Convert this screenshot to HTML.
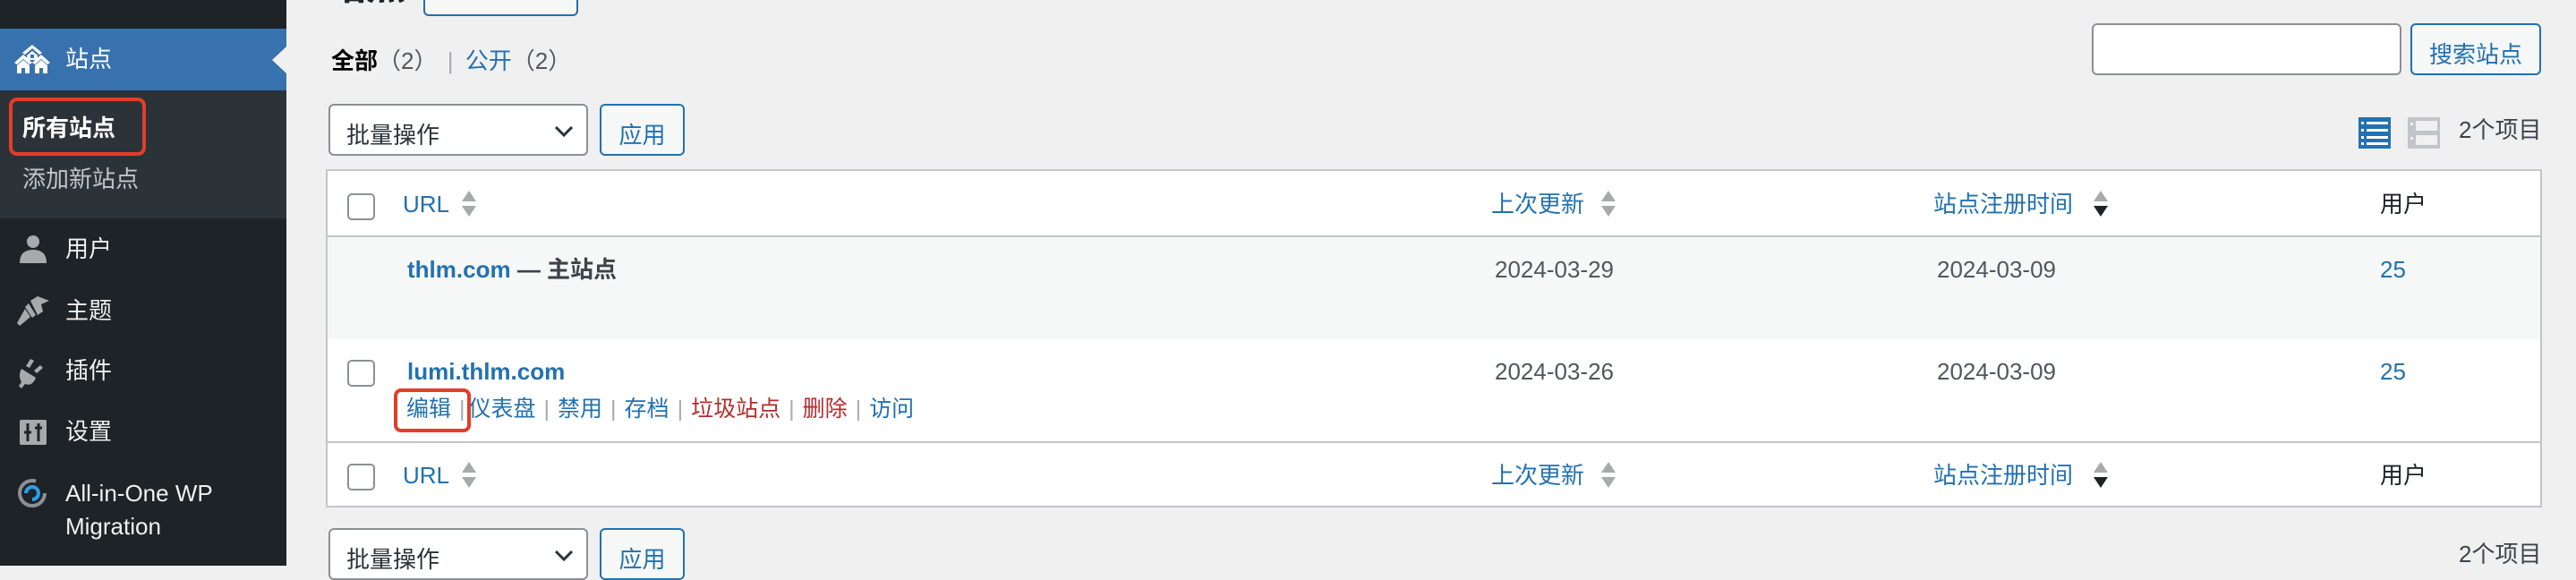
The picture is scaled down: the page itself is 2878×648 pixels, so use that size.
<!DOCTYPE html>
<html><head><meta charset="utf-8">
<style>
*{margin:0;padding:0;box-sizing:border-box}
body{width:2878px;height:632px;overflow:hidden;background:#f0f0f1;font-family:"Liberation Sans","Noto Sans CJK SC",sans-serif;position:relative;color:#3c434a}
.a{position:absolute;white-space:nowrap}
.sb{position:absolute;left:0;top:0;width:320px;height:632px;background:#1d2327}
.mi{position:absolute;left:73px;font-size:26px;color:#f0f0f1;line-height:1}
.ic{position:absolute;left:18px}
.blue{color:#2271b1}
.red{color:#b32d2e}
.cb{position:absolute;width:31px;height:30px;border:2px solid #8c8f94;border-radius:5px;background:#fff;left:388px}
.th{font-size:26px;color:#2271b1;line-height:1}
.td{font-size:26px;color:#50575e;line-height:1}
.sel{position:absolute;left:367px;width:290px;height:58px;border:2px solid #8c8f94;border-radius:6px;background:#fff;font-size:26px;color:#2c3338;padding:13px 0 0 18px}
.btn{position:absolute;left:670px;width:95px;height:58px;border:2px solid #2271b1;border-radius:6px;background:#f6f7f7;font-size:26px;color:#2271b1;text-align:center;padding-top:13px}
.sep{color:#a7aaad}
.act .sep{margin:0 9px 0 9px}
</style></head><body>
<div class="sb"></div>
<div class="a" style="left:0;top:32px;width:320px;height:69px;background:#3872ae"></div>
<div class="a" style="left:304px;top:52px;width:0;height:0;border-top:15px solid transparent;border-bottom:15px solid transparent;border-right:16px solid #f0f0f1"></div>
<svg class="ic" style="top:50px;left:16px" width="40" height="32" viewBox="0 0 40 32" fill="#fff">
<path d="M20 0 L31 9 L28 11 L20 4 L12 11 L9 9Z"/><path d="M14 12 L20 7 L26 12 L26 17 L14 17Z"/>
<path d="M10 11 L20 20 L17 22 L10 16 L3 22 L0 20Z"/><path d="M3 23 L10 17 L17 23 L17 32 L3 32Z"/>
<path d="M30 11 L40 20 L37 22 L30 16 L23 22 L20 20Z"/><path d="M23 23 L30 17 L37 23 L37 32 L23 32Z"/>
<rect x="8" y="26" width="4" height="6" fill="#3872ae"/><rect x="28" y="26" width="4" height="6" fill="#3872ae"/><rect x="18" y="11" width="4" height="4" fill="#3872ae"/>
</svg>
<div class="mi" style="top:53px;color:#fff">站点</div>
<div class="a" style="left:0;top:101px;width:320px;height:143px;background:#2c3338"></div>
<div class="a" style="left:10px;top:109px;width:153px;height:65px;border:4px solid #e43c2a;border-radius:9px"></div>
<div class="mi" style="left:25px;top:130px;font-weight:bold;color:#fff">所有站点</div>
<div class="mi" style="left:25px;top:187px;color:#c3c4c7">添加新站点</div>
<svg class="ic" style="top:262px;left:21px" width="32" height="32" viewBox="0 0 32 32" fill="#a7aaad"><circle cx="16" cy="8" r="7"/><path d="M1 32 Q1 17 16 17 Q31 17 31 32Z"/></svg>
<div class="mi" style="top:265px">用户</div>
<svg class="ic" style="top:330px;left:18px" width="38" height="34" viewBox="0 0 38 34" fill="#a7aaad"><path d="M16 6 L24 1 L37 6 L28 10 L30 18 L24 22Z"/><path d="M14 9 L22 22 L18 25 L10 13Z"/><path d="M10 15 L16 24 L4 34 L1 31Z"/></svg>
<div class="mi" style="top:334px">主题</div>
<svg class="ic" style="top:400px;left:20px" width="34" height="34" viewBox="0 0 34 34" fill="#a7aaad"><path d="M14 1 L18 3 L13 11 L9 9Z"/><path d="M25 8 L28 11 L21 17 L18 14Z"/><path d="M4 12 L20 22 Q16 32 8 29 L4 34 L1 31 L4 27 Q0 20 4 12Z"/></svg>
<div class="mi" style="top:401px">插件</div>
<svg class="ic" style="top:469px;left:22px" width="30" height="28" viewBox="0 0 30 28"><rect width="30" height="28" rx="2" fill="#a7aaad"/><path d="M9 4 V24 M5 14 H13 M21 4 V24 M17 9 H25" stroke="#1d2327" stroke-width="3"/></svg>
<div class="mi" style="top:469px">设置</div>
<svg class="ic" style="top:534px;left:19px" width="34" height="34" viewBox="0 0 34 34"><circle cx="17" cy="17" r="14" fill="none" stroke="#8c8f94" stroke-width="4" stroke-dasharray="70 18"/><path d="M10 17 A7 7 0 1 1 17 24" fill="none" stroke="#2b9fe6" stroke-width="4"/></svg>
<div class="mi" style="top:538px">All-in-One WP</div>
<div class="mi" style="top:575px">Migration</div>

<div class="a" style="left:365px;top:-37px;font-size:44px;font-weight:bold;color:#1d2327;line-height:1">站点</div>
<div class="a" style="left:473px;top:-20px;width:173px;height:38px;border:2px solid #2271b1;border-radius:6px;background:#f6f7f7;font-size:22px;color:#2271b1;text-align:center;overflow:hidden"><div style="margin-top:-8px">Version 4.0</div></div>

<div class="a" style="left:370px;top:55px;font-size:26px;line-height:1"><b style="color:#000">全部</b><span style="color:#50575e">（2）</span> <span class="sep" style="margin:0 6px 0 4px">|</span> <span class="blue">公开</span><span style="color:#50575e">（2）</span></div>

<div class="a" style="left:2337px;top:26px;width:346px;height:58px;border:2px solid #8c8f94;border-radius:6px;background:#fff"></div>
<div class="a" style="left:2693px;top:26px;width:146px;height:58px;border:2px solid #2271b1;border-radius:6px;background:#f6f7f7;font-size:26px;color:#2271b1;text-align:center;padding-top:13px">搜索站点</div>

<div class="sel" style="top:116px">批量操作<svg style="position:absolute;right:14px;top:22px" width="22" height="14" viewBox="0 0 22 14"><path d="M2 2 L11 11 L20 2" fill="none" stroke="#2c3338" stroke-width="3"/></svg></div>
<div class="btn" style="top:116px">应用</div>
<svg class="a" style="left:2635px;top:131px" width="36" height="35" viewBox="0 0 36 35"><rect width="36" height="35" fill="#2271b1"/><g fill="#fff"><rect x="3" y="5" width="3" height="3"/><rect x="9" y="5" width="24" height="3"/><rect x="3" y="13" width="3" height="3"/><rect x="9" y="13" width="24" height="3"/><rect x="3" y="21" width="3" height="3"/><rect x="9" y="21" width="24" height="3"/><rect x="3" y="28" width="3" height="3"/><rect x="9" y="28" width="24" height="3"/></g></svg>
<svg class="a" style="left:2690px;top:131px" width="36" height="35" viewBox="0 0 36 35"><rect width="36" height="35" fill="#c3c4c7"/><rect x="9" y="4" width="24" height="11" fill="#f0f0f1"/><rect x="9" y="20" width="24" height="11" fill="#f0f0f1"/><rect x="3" y="6" width="3" height="3" fill="#f0f0f1"/><rect x="3" y="22" width="3" height="3" fill="#f0f0f1"/></svg>
<div class="a" style="left:2747px;top:132px;font-size:26px;color:#3c434a;line-height:1">2个项目</div>

<div class="a" style="left:364px;top:189px;width:2476px;height:378px;border:2px solid #c3c4c7;background:#fff"></div>
<div class="a" style="left:366px;top:263px;width:2472px;height:2px;background:#c3c4c7"></div>
<div class="a" style="left:366px;top:265px;width:2472px;height:114px;background:#f6f7f7"></div>
<div class="a" style="left:366px;top:493px;width:2472px;height:2px;background:#c3c4c7"></div>

<div class="cb" style="top:216px"></div>
<div class="a th" style="left:450px;top:215px">URL</div>
<svg class="a" style="left:516px;top:213px" width="16" height="30" viewBox="0 0 16 30" fill="#a7aaad"><path d="M8 0 L16 12 H0Z"/><path d="M0 17 H16 L8 29Z"/></svg>
<div class="a th" style="left:1666px;top:215px">上次更新</div>
<svg class="a" style="left:1789px;top:213px" width="16" height="30" viewBox="0 0 16 30" fill="#a7aaad"><path d="M8 0 L16 12 H0Z"/><path d="M0 17 H16 L8 29Z"/></svg>
<div class="a th" style="left:2160px;top:215px">站点注册时间</div>
<svg class="a" style="left:2339px;top:213px" width="16" height="30" viewBox="0 0 16 30"><path d="M8 0 L16 12 H0Z" fill="#a7aaad"/><path d="M0 17 H16 L8 29Z" fill="#1d2327"/></svg>
<div class="a" style="left:2659px;top:215px;font-size:26px;color:#1d2327;line-height:1">用户</div>

<div class="a" style="left:455px;top:288px;font-size:26px;font-weight:bold;line-height:1"><span class="blue">thlm.com</span> <span style="color:#3c434a">— 主站点</span></div>
<div class="a td" style="left:1670px;top:288px">2024-03-29</div>
<div class="a td" style="left:2164px;top:288px">2024-03-09</div>
<div class="a" style="left:2659px;top:288px;font-size:26px;color:#2271b1;line-height:1">25</div>

<div class="cb" style="top:402px"></div>
<div class="a" style="left:455px;top:402px;font-size:26px;font-weight:bold;color:#2271b1;line-height:1">lumi.thlm.com</div>
<div class="a td" style="left:1670px;top:402px">2024-03-26</div>
<div class="a td" style="left:2164px;top:402px">2024-03-09</div>
<div class="a" style="left:2659px;top:402px;font-size:26px;color:#2271b1;line-height:1">25</div>
<div class="a act" style="left:454px;top:445px;font-size:25px;line-height:1"><span class="blue">编辑</span><span class="sep" style="margin:0 4px 0 9px">|</span><span class="blue">仪表盘</span><span class="sep">|</span><span class="blue">禁用</span><span class="sep">|</span><span class="blue">存档</span><span class="sep">|</span><span class="red">垃圾站点</span><span class="sep">|</span><span class="red">删除</span><span class="sep">|</span><span class="blue">访问</span></div>
<div class="a" style="left:440px;top:434px;width:86px;height:49px;border:4px solid #e43c2a;border-radius:8px"></div>

<div class="cb" style="top:518px"></div>
<div class="a th" style="left:450px;top:518px">URL</div>
<svg class="a" style="left:516px;top:516px" width="16" height="30" viewBox="0 0 16 30" fill="#a7aaad"><path d="M8 0 L16 12 H0Z"/><path d="M0 17 H16 L8 29Z"/></svg>
<div class="a th" style="left:1666px;top:518px">上次更新</div>
<svg class="a" style="left:1789px;top:516px" width="16" height="30" viewBox="0 0 16 30" fill="#a7aaad"><path d="M8 0 L16 12 H0Z"/><path d="M0 17 H16 L8 29Z"/></svg>
<div class="a th" style="left:2160px;top:518px">站点注册时间</div>
<svg class="a" style="left:2339px;top:516px" width="16" height="30" viewBox="0 0 16 30"><path d="M8 0 L16 12 H0Z" fill="#a7aaad"/><path d="M0 17 H16 L8 29Z" fill="#1d2327"/></svg>
<div class="a" style="left:2659px;top:518px;font-size:26px;color:#1d2327;line-height:1">用户</div>

<div class="sel" style="top:590px">批量操作<svg style="position:absolute;right:14px;top:22px" width="22" height="14" viewBox="0 0 22 14"><path d="M2 2 L11 11 L20 2" fill="none" stroke="#2c3338" stroke-width="3"/></svg></div>
<div class="btn" style="top:590px">应用</div>
<div class="a" style="left:2747px;top:606px;font-size:26px;color:#3c434a;line-height:1">2个项目</div>
</body></html>
